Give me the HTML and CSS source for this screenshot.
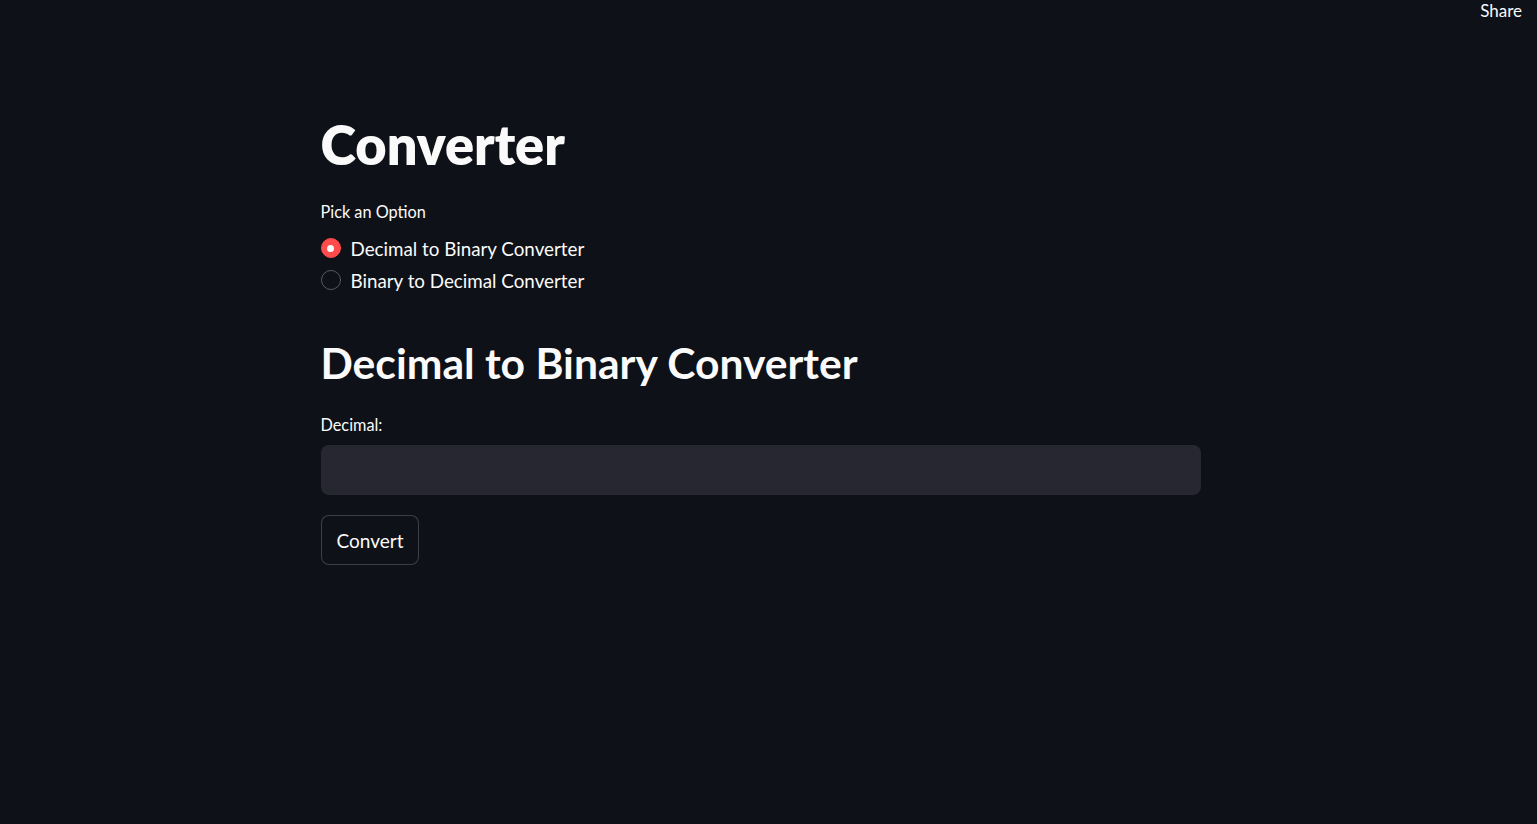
FILE: index.html
```html
<!DOCTYPE html>
<html>
<head>
<meta charset="utf-8">
<link rel="stylesheet" href="styles.css">
</head>
<body>
<header class="topbar"><span class="share">Share</span></header>
<main class="main">
  <h1 class="title">Converter</h1>
  <div class="radio-group">
    <div class="label">Pick an Option</div>
    <div class="radio-options">
      <label class="radio"><span class="dot checked"></span><span class="radio-text">Decimal to Binary Converter</span></label>
      <label class="radio"><span class="dot"></span><span class="radio-text">Binary to Decimal Converter</span></label>
    </div>
  </div>
  <h2 class="subtitle">Decimal to Binary Converter</h2>
  <div class="field">
    <div class="label">Decimal:</div>
    <div class="input"></div>
  </div>
  <button class="btn">Convert</button>
</main>
</body>
</html>
```
FILE: styles.css
```css
html, body {
  margin: 0;
  padding: 0;
  background: #0e1117;
  color: #fafafa;
  font-family: Lato, "Noto Sans", sans-serif;
  height: 100%;
}
.topbar {
  display: flex;
  justify-content: flex-end;
  height: 24px;
  padding: 0 15px 0 0;
}
.share {
  font-size: 17px;
  line-height: 22px;
  margin-top: 0;
}
.main {
  width: 880px;
  margin: 0 auto;
  padding-top: 91px;
  display: flex;
  flex-direction: column;
  align-items: flex-start;
  position: relative;
  left: -8px;
}
.title {
  font-size: 54px;
  font-weight: 800;
  line-height: 60px;
  margin: 0;
}
.radio-group {
  margin-top: 27px;
}
.label {
  font-size: 16.3px;
  line-height: 20px;
}
.radio-options {
  display: flex;
  flex-direction: column;
  margin-top: 15px;
  gap: 10px;
}
.radio {
  display: flex;
  align-items: center;
  gap: 10px;
  height: 22px;
}
.dot {
  width: 18px;
  height: 18px;
  border-radius: 50%;
  border: 1px solid rgba(250, 250, 250, 0.3);
  box-sizing: content-box;
  display: flex;
  align-items: center;
  justify-content: center;
}
.dot.checked {
  background: #ff4b4b;
  border-color: #ff4b4b;
}
.dot.checked::after {
  content: "";
  width: 7px;
  height: 7px;
  border-radius: 50%;
  background: #fafafa;
}
.radio-text {
  font-size: 18.8px;
}
.subtitle {
  font-size: 42.6px;
  font-weight: 700;
  line-height: 50px;
  margin: 47px 0 0;
}
.field {
  margin-top: 27px;
  width: 100%;
}
.input {
  margin-top: 10px;
  height: 50px;
  background: #262730;
  border-radius: 8px;
  width: 100%;
}
.btn {
  margin-top: 20px;
  height: 50px;
  padding: 0 15px;
  background: #0e1117;
  color: #fafafa;
  border: 1px solid rgba(250, 250, 250, 0.2);
  border-radius: 8px;
  font-family: inherit;
  font-size: 19px;
}
```
